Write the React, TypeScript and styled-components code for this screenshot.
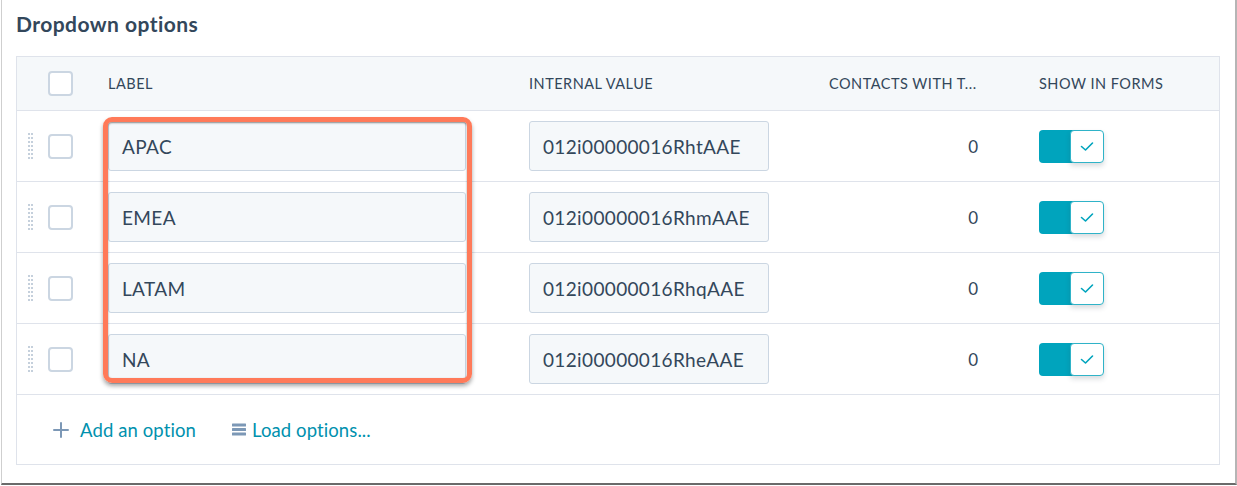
import { FC } from "react"
import styled, { createGlobalStyle } from "styled-components"

const GlobalStyle = createGlobalStyle`
  html, body {
    margin: 0;
    padding: 0;
    background: #ffffff;
  }
  body {
    font-family: Lato, "Open Sans", "Liberation Sans", sans-serif;
    color: #33475b;
  }
`

const Frame = styled.div`
  box-sizing: border-box;
  width: 1236px;
  height: 485px;
  margin-left: 1px;
  border-left: 1px solid #cfcfcf;
  border-right: 2px solid #b5b5b5;
  border-bottom: 2px solid #6a6a6a;
  box-shadow: 0 1px 0 #bdbdbd;
  padding: 0 15px 0 14px;
  background: #ffffff;
`

const Heading = styled.h2`
  margin: 0;
  height: 56px;
  padding-top: 11px;
  box-sizing: border-box;
  font-size: 21px;
  line-height: 26px;
  font-weight: 700;
  letter-spacing: 0.45px;
  color: #33475b;
`

const Table = styled.div`
  border: 1px solid #dfe3eb;
`

const columns = "91px 421px 300px 210px 1fr"

const HeaderRow = styled.div`
  display: grid;
  grid-template-columns: ${columns};
  align-items: center;
  height: 53px;
  background: #f5f8fa;
  border-bottom: 1px solid #dfe3eb;
  font-size: 14.5px;
  letter-spacing: 0.5px;
  text-transform: uppercase;
  color: #33475b;
`

const HeaderCell = styled.div`
  white-space: nowrap;
`

const Body = styled.div`
  position: relative;
`

const Row = styled.div`
  display: grid;
  grid-template-columns: ${columns};
  align-items: center;
  height: 70px;
  border-bottom: 1px solid #dfe3eb;
`

const SelectCell = styled.div<{ header?: boolean }>`
  display: flex;
  align-items: center;
  gap: 15px;
  padding-left: ${({ header }) => (header ? "31px" : "11px")};
`

const DragHandle = styled.span`
  width: 5px;
  height: 27px;
  background-image: linear-gradient(to bottom, transparent 2px, #ffffff 2px),
    linear-gradient(to right, #c5d0dc 2px, transparent 2px);
  background-size: 3px 4px;
`

const Checkbox = styled.span`
  box-sizing: border-box;
  width: 25px;
  height: 25px;
  border: 2px solid #cbd6e2;
  border-radius: 4px;
  background: #ffffff;
`

const TextInput = styled.div<{ width: number }>`
  box-sizing: border-box;
  width: ${({ width }) => width}px;
  height: 50px;
  display: flex;
  align-items: center;
  padding-left: 13px;
  background: #f5f8fa;
  border: 1px solid #cbd6e2;
  border-radius: 3px;
  font-size: 19px;
  letter-spacing: 0.35px;
  color: #33475b;
`

const CountCell = styled.div`
  text-align: right;
  padding-right: 61px;
  font-size: 17px;
  color: #33475b;
`

const Toggle = styled.span`
  position: relative;
  display: block;
  width: 65px;
  height: 33px;
`

const ToggleTrack = styled.span`
  display: block;
  width: 38px;
  height: 33px;
  background: #00a4bd;
  border-radius: 4px 0 0 4px;
`

const ToggleKnob = styled.span`
  position: absolute;
  top: 0;
  right: 0;
  box-sizing: border-box;
  width: 34px;
  height: 33px;
  display: flex;
  align-items: center;
  justify-content: center;
  background: #ffffff;
  border: 1px solid #2fb3c8;
  border-radius: 4px;
  box-shadow: 0 3px 5px rgba(45, 62, 80, 0.18);
`

const Footer = styled.div`
  display: flex;
  align-items: center;
  height: 69px;
  padding-left: 36px;
  gap: 36px;
`

const FooterLink = styled.a<{ iconGap: number }>`
  display: flex;
  align-items: center;
  gap: ${({ iconGap }) => iconGap}px;
  font-size: 18.5px;
  letter-spacing: 0.1px;
  color: #0091ae;
  text-decoration: none;
  cursor: pointer;
`

const Highlight = styled.div`
  position: absolute;
  left: 86px;
  top: 6px;
  width: 369px;
  height: 266px;
  box-sizing: border-box;
  border: 5px solid #ff7a59;
  border-radius: 9px;
  box-shadow: 0 3px 4px rgba(0, 0, 0, 0.35), inset 0 1px 2px rgba(0, 0, 0, 0.45);
  pointer-events: none;
`

const CheckIcon: FC = () => (
  <svg width="14" height="11" viewBox="0 0 14 11" fill="none">
    <path d="M1.5 5.5 L5.5 9 L12.5 2" stroke="#00a4bd" strokeWidth="1.6" strokeLinecap="round" strokeLinejoin="round" />
  </svg>
)

const PlusIcon: FC = () => (
  <svg width="16" height="16" viewBox="0 0 16 16">
    <path d="M8 1 V15 M1 8 H15" stroke="#7c98b6" strokeWidth="2" strokeLinecap="round" />
  </svg>
)

const ListIcon: FC = () => (
  <svg width="14" height="13" viewBox="0 0 14 13">
    <rect x="0" y="0.5" width="14" height="3" rx="0.5" fill="#7c98b6" />
    <rect x="0" y="5" width="14" height="3" rx="0.5" fill="#7c98b6" />
    <rect x="0" y="9.5" width="14" height="3" rx="0.5" fill="#7c98b6" />
  </svg>
)

interface OptionRow {
  label: string
  value: string
  contacts: number
}

const options: OptionRow[] = [
  { label: "APAC", value: "012i00000016RhtAAE", contacts: 0 },
  { label: "EMEA", value: "012i00000016RhmAAE", contacts: 0 },
  { label: "LATAM", value: "012i00000016RhqAAE", contacts: 0 },
  { label: "NA", value: "012i00000016RheAAE", contacts: 0 },
]

export default function App() {
  return (
    <>
      <GlobalStyle />
      <Frame>
        <Heading>Dropdown options</Heading>
        <Table>
          <HeaderRow>
            <SelectCell header>
              <Checkbox />
            </SelectCell>
            <HeaderCell>Label</HeaderCell>
            <HeaderCell>Internal value</HeaderCell>
            <HeaderCell>Contacts with t...</HeaderCell>
            <HeaderCell>Show in forms</HeaderCell>
          </HeaderRow>
          <Body>
            {options.map((option) => (
              <Row key={option.value}>
                <SelectCell>
                  <DragHandle />
                  <Checkbox />
                </SelectCell>
                <TextInput width={358}>{option.label}</TextInput>
                <TextInput width={240}>{option.value}</TextInput>
                <CountCell>{option.contacts}</CountCell>
                <Toggle>
                  <ToggleTrack />
                  <ToggleKnob>
                    <CheckIcon />
                  </ToggleKnob>
                </Toggle>
              </Row>
            ))}
            <Highlight />
          </Body>
          <Footer>
            <FooterLink iconGap={11}>
              <PlusIcon />
              Add an option
            </FooterLink>
            <FooterLink iconGap={6}>
              <ListIcon />
              Load options...
            </FooterLink>
          </Footer>
        </Table>
      </Frame>
    </>
  )
}
